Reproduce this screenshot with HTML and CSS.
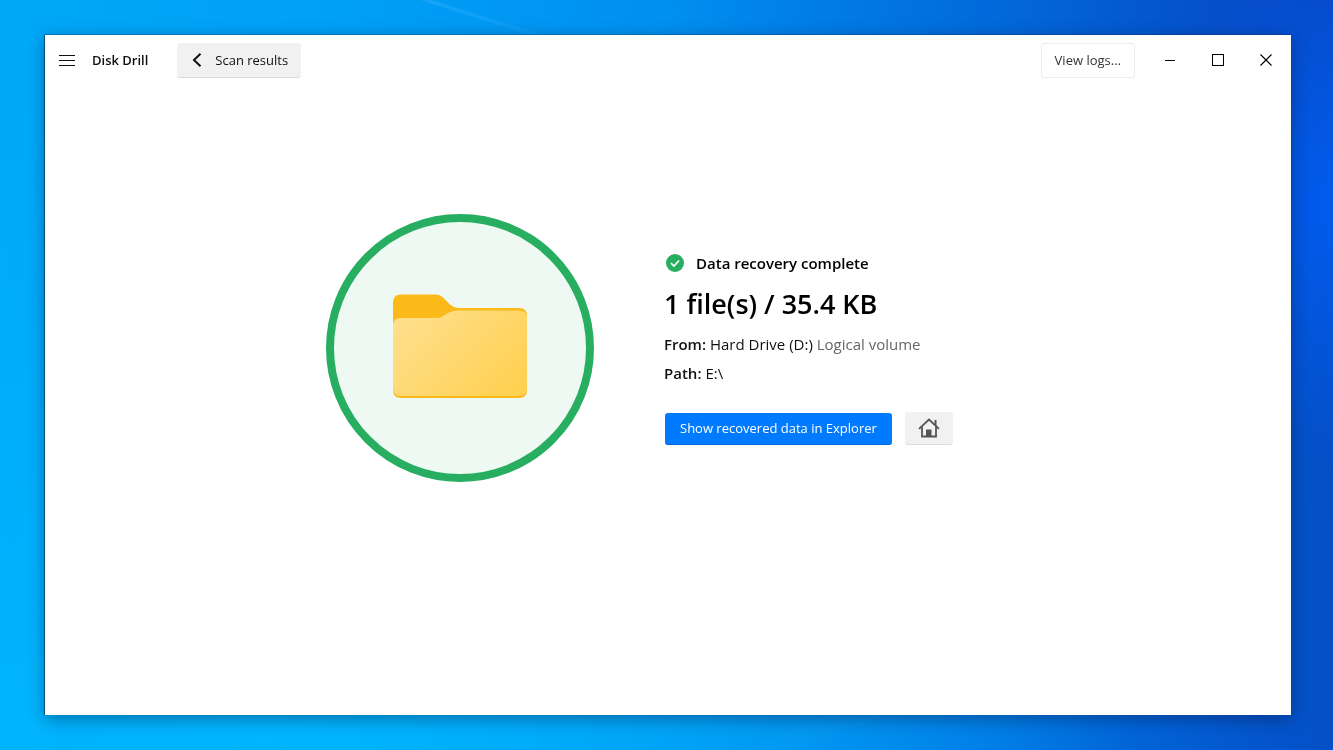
FILE: index.html
```html
<!DOCTYPE html>
<html lang="en">
<head>
    <meta charset="UTF-8">
    <meta name="viewport" content="width=device-width, initial-scale=1.0">
    <title>Disk Drill</title>
    <link rel="stylesheet" href="styles.css">
</head>
<body>
    <!-- Light rays on the desktop -->
    <svg class="wallpaper" viewBox="0 0 1333 750" preserveAspectRatio="none" aria-hidden="true">
        <defs>
            <linearGradient id="ray" x1="0" y1="1" x2="0.3" y2="0">
                <stop offset="0" stop-color="#3ab4ff" stop-opacity="0"/>
                <stop offset="1" stop-color="#3ab4ff" stop-opacity="0.4"/>
            </linearGradient>
        </defs>
        <path d="M420 0 L432 0 L560 40 L545 40 Z" fill="url(#ray)"/>
        <path d="M432 0 L760 0 L760 40 L560 40 Z" fill="#0a9cff" fill-opacity="0.04"/>
        <path d="M0 662 L50 655 L50 750 L0 750 Z" fill="#00c0ff" fill-opacity="0.15"/>
        <path d="M745 750 L840 710 L900 710 L800 750 Z" fill="#3ab4ff" fill-opacity="0.06"/>
    </svg>

    <div class="window">
        <header class="titlebar">
            <button class="icon-btn menu-btn" type="button" aria-label="Menu">
                <svg width="16" height="12" viewBox="0 0 16 12" shape-rendering="crispEdges">
                    <path d="M0 1.5H16M0 6.5H16M0 11.5H16" stroke="#111" fill="none"/>
                </svg>
            </button>
            <span class="app-name">Disk Drill</span>
            <button class="btn back-btn" type="button">
                <svg width="10" height="14" viewBox="0 0 10 14">
                    <path d="M8.5 0.8 L2 7 L8.5 13.2" stroke="#111" stroke-width="2" fill="none"/>
                </svg>
                Scan results
            </button>

            <button class="btn logs-btn" type="button">View logs...</button>
            <div class="window-controls">
                <button class="icon-btn" type="button" aria-label="Minimize">
                    <svg width="12" height="12" viewBox="0 0 12 12">
                        <path d="M1 6.5H11" stroke="#000" fill="none"/>
                    </svg>
                </button>
                <button class="icon-btn" type="button" aria-label="Maximize">
                    <svg width="12" height="12" viewBox="0 0 12 12">
                        <rect x="0.5" y="0.5" width="11" height="11" stroke="#000" fill="none"/>
                    </svg>
                </button>
                <button class="icon-btn" type="button" aria-label="Close">
                    <svg width="12" height="12" viewBox="0 0 12 12">
                        <path d="M0.5 0.5L11.5 11.5M11.5 0.5L0.5 11.5" stroke="#000" stroke-width="1.1" fill="none"/>
                    </svg>
                </button>
            </div>
        </header>

        <main class="result">
            <div class="progress-ring">
                <svg width="134" height="104" viewBox="0 0 134 104" aria-hidden="true">
                    <defs>
                        <linearGradient id="front" x1="0" y1="0.2" x2="1" y2="0.8">
                            <stop offset="0" stop-color="#ffdf8c"/>
                            <stop offset="1" stop-color="#ffd051"/>
                        </linearGradient>
                    </defs>
                    <path d="M8 0.500H43Q47 0.500 50 3.500L57 10.500Q61 14 65 14H126Q134 14 134 22V96Q134 104 126 104H8Q0 104 0 96V8.500Q0 0.500 8 0.500Z" fill="#fbba1a"/>
                    <path d="M8 24H44Q47 24 50 22L56 18.500Q60 16.500 65 16.500H126Q134 16.500 134 24V94Q134 102 126 102H8Q0 102 0 94V32Q0 24 8 24Z" fill="url(#front)"/>
                </svg>
            </div>

            <section class="summary">
                <div class="status">
                    <svg width="18" height="18" viewBox="0 0 18 18" aria-hidden="true">
                        <circle cx="9" cy="9" r="9" fill="#27ae60"/>
                        <path d="M5 9.200L8 12L13 6.500" stroke="#fff" stroke-width="1.700" fill="none"/>
                    </svg>
                    Data recovery complete
                </div>
                <h1>1 file(s) / 35.4 KB</h1>
                <p><strong>From:</strong> Hard Drive (D:) <span class="muted">Logical volume</span></p>
                <p><strong>Path:</strong> E:\</p>
                <div class="actions">
                    <button class="btn primary-btn" type="button">Show recovered data in Explorer</button>
                    <button class="btn home-btn" type="button" aria-label="Home">
                        <svg width="22" height="20" viewBox="0 0 22 20">
                            <path d="M1 10.800L11 1.500L21 10.800" stroke="#555" stroke-width="1.800" fill="none"/>
                            <path d="M4 8.500V18.500H18V8.500" stroke="#555" stroke-width="1.800" fill="none"/>
                            <path d="M16.500 2H18.500V8.500L16.500 6.500Z" fill="#555"/>
                            <rect x="8" y="11.500" width="5.500" height="7" fill="#555"/>
                        </svg>
                    </button>
                </div>
            </section>
        </main>
    </div>
</body>
</html>
```
FILE: styles.css
```css
* {
    box-sizing: border-box;
}
body {
    margin: 0;
    min-height: 100vh;
    padding: 35px 42px 35px 45px;
    display: flex;
    font-family: "Open Sans", "Noto Sans", sans-serif;
    font-size: 13px;
    line-height: 20px;
    color: #111;
    background:
        radial-gradient(ellipse 170px 260px at 100% 27%, rgba(0, 98, 255, 0.7), rgba(0, 98, 255, 0)),
        radial-gradient(ellipse 50% 70% at 100% 0, rgba(10, 60, 190, 0.4), rgba(10, 60, 190, 0)),
        radial-gradient(ellipse 65% 90% at 20% 100%, rgba(0, 184, 255, 0.9), rgba(0, 184, 255, 0)),
        linear-gradient(90deg, #00a8f8 0%, #00a0f6 25%, #0090f0 50%, #0074e2 75%, #0454cc 95%, #0450c6 100%);
    background-color: #0092f2;
}
.wallpaper {
    position: fixed;
    top: 0;
    left: 0;
    width: 100%;
    height: 100%;
}
.window {
    position: relative;
    flex: 1;
    display: flex;
    flex-direction: column;
    background-color: #fff;
    box-shadow: -1px 0 0 rgba(0, 30, 60, 0.6), 0 -1px 0 rgba(0, 30, 60, 0.25), 0 4px 16px rgba(0, 20, 50, 0.4);
}

/* Title bar */
.titlebar {
    display: flex;
    align-items: center;
    height: 50px;
    padding: 0 1px 0 6px;
}
button {
    font: inherit;
    color: inherit;
    padding: 0;
    border: none;
    background: none;
    cursor: pointer;
}
.icon-btn {
    display: flex;
    align-items: center;
    justify-content: center;
    width: 48px;
    height: 40px;
}
.menu-btn {
    width: 32px;
}
.app-name {
    margin: 0 29px 0 9px;
    font-weight: 600;
}
.btn {
    display: flex;
    align-items: center;
    justify-content: center;
    border-radius: 3px;
}
.back-btn {
    gap: 13px;
    height: 35px;
    padding: 0 13px 0 15px;
    background-color: #f1f1f1;
    border-bottom: 1px solid #dcdcdc;
}
.logs-btn {
    height: 35px;
    margin-left: auto;
    margin-right: 11px;
    padding: 0 13px;
    color: #333;
    border: 1px solid #ececec;
}
.window-controls {
    display: flex;
}

/* Recovery result */
.result {
    flex: 1;
    display: flex;
    align-items: center;
    justify-content: center;
    gap: 70px;
    padding-bottom: 104px;
}
.progress-ring {
    display: flex;
    align-items: center;
    justify-content: center;
    width: 268px;
    height: 268px;
    padding-bottom: 4px;
    border: 8px solid #27ae60;
    border-radius: 50%;
    background-color: #eff9f4;
}
.summary {
    width: 346px;
    font-size: 15px;
    line-height: 24px;
}
.status {
    display: flex;
    align-items: center;
    gap: 12px;
    padding-left: 2px;
    font-weight: 600;
    color: #000;
}
h1 {
    margin: 11px 0 10px;
    font-size: 27px;
    line-height: 36px;
    font-weight: 600;
    color: #000;
}
p {
    margin: 0 0 5px;
}
strong {
    font-weight: 600;
}
.muted {
    color: #666;
}
.actions {
    display: flex;
    align-items: center;
    gap: 13px;
    margin-top: 27px;
    padding-left: 1px;
}
.primary-btn {
    height: 32px;
    padding: 0 15px;
    font-size: 13px;
    color: #fff;
    background-color: #007aff;
    border-bottom: 1px solid #0068da;
}
.home-btn {
    width: 48px;
    height: 33px;
    background-color: #f1f1f1;
    border-bottom: 1px solid #dcdcdc;
}
```
